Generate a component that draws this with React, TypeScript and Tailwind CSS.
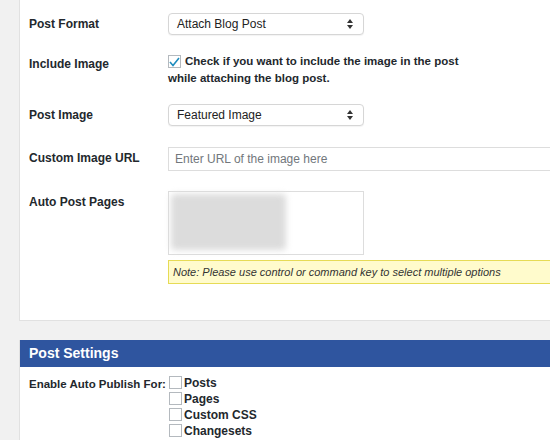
import React from "react";

const Arrows = () => (
  <svg width="6" height="10" viewBox="0 0 6 10" className="text-[#333]">
    <path d="M0 4 L3 0 L6 4 Z M0 6 L3 10 L6 6 Z" fill="currentColor" />
  </svg>
);

const Select = ({ v }: { v: string }) => (
  <div className="w-[196px] h-[22px] border border-[#d6d6d6] rounded-[4px] bg-white shadow-[0_1px_1px_rgba(0,0,0,0.05)] flex items-center justify-between pl-[8px] pr-[10px] text-[12px] text-[#222]">
    <span>{v}</span>
    <Arrows />
  </div>
);

const Box = () => <span className="inline-block w-[13px] h-[13px] border border-[#b4b9be] bg-white shrink-0" />;

export default function App() {
  return (
    <div className="w-[550px] h-[440px] bg-[#f1f1f1] overflow-hidden relative text-[#23282d]" style={{ fontFamily: '"Liberation Sans", Arial, sans-serif' }}>
      <div className="ml-[19px] h-[321px] bg-white border-l border-b border-[#e1e1e1] pl-[9px] pt-[14px] text-[12px]">
        <div className="flex h-[40px]">
          <div className="w-[139px] font-bold pt-[1px]">Post Format</div>
          <div className="-mt-[1px]"><Select v="Attach Blog Post" /></div>
        </div>
        <div className="flex h-[51px]">
          <div className="w-[139px] font-bold pt-[1px]">Include Image</div>
          <div className="font-bold leading-[17px] -mt-[1px] text-[11.5px]">
            <div className="flex items-center gap-[4px]">
              <span className="inline-flex w-[13px] h-[13px] border border-[#b4b9be] items-center justify-center">
                <svg width="11" height="10" viewBox="0 0 11 10"><path d="M1 5 L4 8.5 L10 1" stroke="#1e8cbe" strokeWidth="1.6" fill="none" /></svg>
              </span>
              Check if you want to include the image in the post
            </div>
            <div>while attaching the blog post.</div>
          </div>
        </div>
        <div className="flex h-[43px]">
          <div className="w-[139px] font-bold pt-[1px]">Post Image</div>
          <div className="-mt-[1px]"><Select v="Featured Image" /></div>
        </div>
        <div className="flex h-[44px]">
          <div className="w-[139px] font-bold pt-[1px]">Custom Image URL</div>
          <div className="-mt-[1px] h-[24px] flex-1 border border-[#ddd] border-r-0 flex items-center pl-[6px] text-[#72777c] text-[12px]">Enter URL of the image here</div>
        </div>
        <div className="flex">
          <div className="w-[139px] font-bold pt-[1px]">Auto Post Pages</div>
          <div className="flex-1 -mt-[1px]">
            <div className="w-[196px] h-[64px] border border-[#ddd] p-[2px]">
              <div className="w-[115px] h-[56px] bg-[#dcdcdc] blur-[3px] rounded-sm" />
            </div>
            <div className="mt-[5px] h-[24px] border border-[#e6db55] border-r-0 bg-[#fffbcc] flex items-center pl-[4px] italic text-[11px] text-[#333]">
              Note: Please use control or command key to select multiple options
            </div>
          </div>
        </div>
      </div>
      <div className="ml-[19px] mt-[19px] h-[100px] bg-white border-l border-[#e1e1e1]">
        <div className="h-[27px] bg-[#2f559f] text-white font-bold text-[14px] flex items-center pl-[9px]">Post Settings</div>
        <div className="flex pl-[9px] pt-[9px] text-[12px] font-bold">
          <div className="w-[140px] whitespace-nowrap text-[11.5px]">Enable Auto Publish For:</div>
          <div className="flex flex-col gap-[3px]">
            {["Posts", "Pages", "Custom CSS", "Changesets"].map((t) => (
              <div key={t} className="flex items-center gap-[2px] h-[13px]"><Box />{t}</div>
            ))}
          </div>
        </div>
      </div>
    </div>
  );
}
